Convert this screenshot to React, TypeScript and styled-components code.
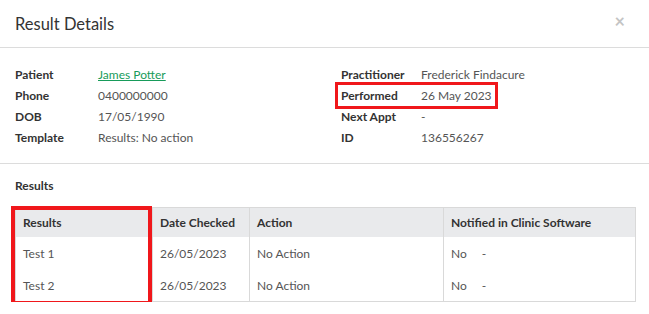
import styled, { createGlobalStyle } from "styled-components";

const GlobalStyle = createGlobalStyle`
  html, body {
    margin: 0;
    padding: 0;
    background: #fff;
  }
  body {
    font-family: Lato, "Open Sans", "Liberation Sans", sans-serif;
    color: #333;
  }
`;

const Modal = styled.div`
  width: 649px;
  background: #fff;
`;

const Header = styled.div`
  display: flex;
  align-items: center;
  justify-content: space-between;
  height: 47px;
  padding: 0 24px 0 15px;
  border-bottom: 1px solid #dcdcdc;
`;

const Title = styled.h4`
  margin: 0;
  font-size: 16.5px;
  font-weight: 400;
  color: #333;
`;

const Close = styled.span`
  font-size: 18px;
  font-weight: 700;
  color: #c4c4c4;
  line-height: 1;
  margin-top: -5px;
`;

const Details = styled.div`
  display: grid;
  grid-template-columns: 326px 1fr;
  padding: 16px 15px 15px;
  border-bottom: 1px solid #dcdcdc;
`;

const Column = styled.div`
  display: flex;
  flex-direction: column;
`;

const Row = styled.div<{ $label: number; $marked?: boolean }>`
  position: relative;
  display: grid;
  grid-template-columns: ${(p) => p.$label}px auto;
  width: fit-content;
  height: 21px;
  align-items: center;
  font-size: 12px;

  ${(p) =>
    p.$marked &&
    `
    &::after {
      content: "";
      position: absolute;
      top: -3px;
      bottom: -3px;
      left: -6px;
      right: -6px;
      border: 3px solid #f0171b;
    }
  `}
`;

const Label = styled.span`
  font-weight: 700;
  color: #333;
`;

const Value = styled.span`
  color: #555;
`;

const Link = styled.a`
  color: #179b5a;
  text-decoration: underline;
`;

const Section = styled.div`
  padding: 11px 13px 0 15px;
`;

const SectionTitle = styled.div`
  font-size: 12px;
  font-weight: 700;
  color: #333;
  line-height: 21px;
  margin-bottom: 11px;
`;

const TableWrap = styled.div`
  position: relative;
`;

const ColumnHighlight = styled.div`
  position: absolute;
  left: -4px;
  top: -1px;
  bottom: -3px;
  width: 133px;
  border: 4px solid #f0171b;
`;

const Table = styled.table`
  width: 100%;
  table-layout: fixed;
  border-collapse: collapse;
  border: 1px solid #d9d9d9;
  font-size: 12px;
`;

const Th = styled.th`
  height: 29px;
  padding: 0 7px;
  text-align: left;
  font-weight: 700;
  color: #333;
  background: #e9eaec;
  border-left: 1px solid #d9d9d9;
  white-space: nowrap;
`;

const Td = styled.td`
  height: 32px;
  padding: 0 7px;
  color: #555;
  border-left: 1px solid #d9d9d9;
`;

const Dash = styled.span`
  margin-left: 15px;
`;

const left = [
  { label: "Patient", value: <Link>James Potter</Link> },
  { label: "Phone", value: "0400000000" },
  { label: "DOB", value: "17/05/1990" },
  { label: "Template", value: "Results: No action" },
];

const right = [
  { label: "Practitioner", value: "Frederick Findacure" },
  { label: "Performed", value: "26 May 2023", marked: true },
  { label: "Next Appt", value: "-" },
  { label: "ID", value: "136556267" },
];

const results = [
  { name: "Test 1", date: "26/05/2023", action: "No Action", notified: "No" },
  { name: "Test 2", date: "26/05/2023", action: "No Action", notified: "No" },
];

const widths = [137, 97, 194];

export default function App() {
  return (
    <>
      <GlobalStyle />
      <Modal>
        <Header>
          <Title>Result Details</Title>
          <Close>×</Close>
        </Header>
        <Details>
          <Column>
            {left.map((r) => (
              <Row key={r.label} $label={83}>
                <Label>{r.label}</Label>
                <Value>{r.value}</Value>
              </Row>
            ))}
          </Column>
          <Column>
            {right.map((r) => (
              <Row key={r.label} $label={80} $marked={r.marked}>
                <Label>{r.label}</Label>
                <Value>{r.value}</Value>
              </Row>
            ))}
          </Column>
        </Details>
        <Section>
          <SectionTitle>Results</SectionTitle>
          <TableWrap>
            <Table>
              <colgroup>
                {widths.map((w) => (
                  <col key={w} style={{ width: w }} />
                ))}
                <col />
              </colgroup>
              <thead>
                <tr>
                  <Th>Results</Th>
                  <Th>Date Checked</Th>
                  <Th>Action</Th>
                  <Th>Notified in Clinic Software</Th>
                </tr>
              </thead>
              <tbody>
                {results.map((r) => (
                  <tr key={r.name}>
                    <Td>{r.name}</Td>
                    <Td>{r.date}</Td>
                    <Td>{r.action}</Td>
                    <Td>
                      {r.notified}
                      <Dash>-</Dash>
                    </Td>
                  </tr>
                ))}
              </tbody>
            </Table>
            <ColumnHighlight />
          </TableWrap>
        </Section>
      </Modal>
    </>
  );
}
